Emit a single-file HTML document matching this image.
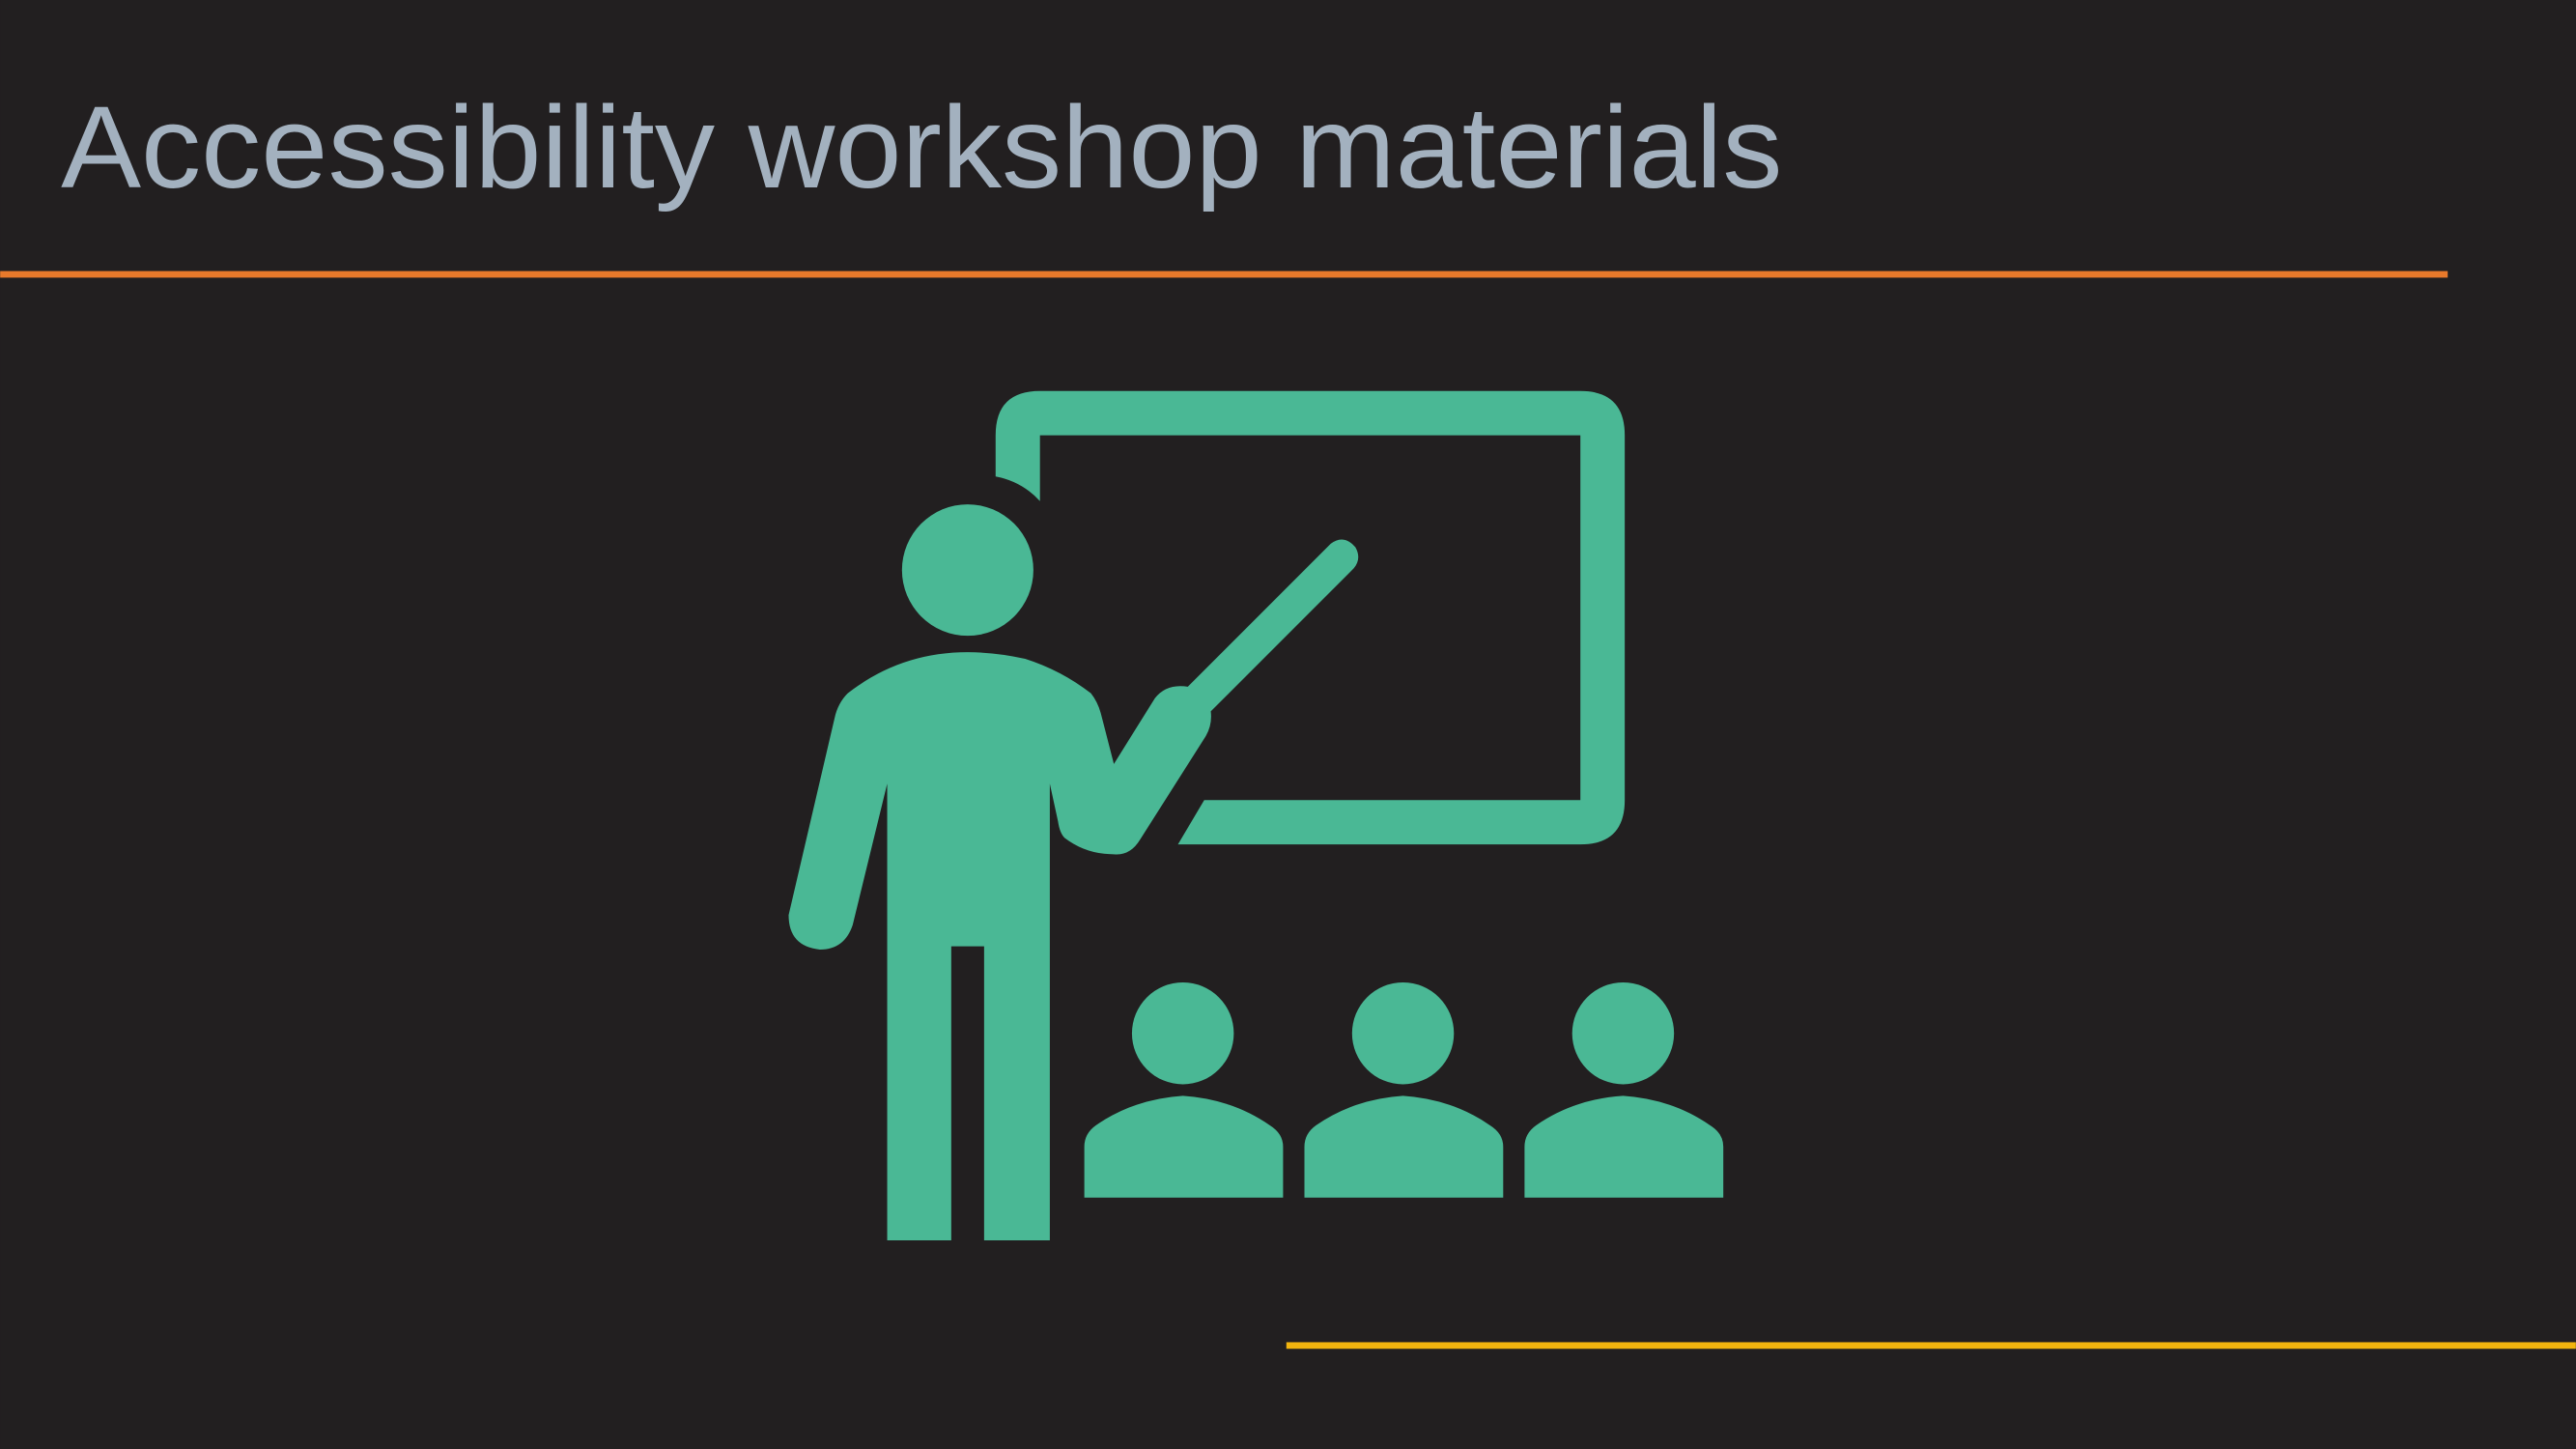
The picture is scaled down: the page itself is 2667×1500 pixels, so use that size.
<!DOCTYPE html>
<html><head><meta charset="utf-8"><style>
html,body{margin:0;padding:0;background:#221f20;width:2667px;height:1500px;overflow:hidden}
svg{display:block}
</style></head><body>
<svg width="2667" height="1500" viewBox="0 0 1568 882" xmlns="http://www.w3.org/2000/svg">
<rect width="1568" height="882" fill="#221f20"/>
<text x="37" y="114" font-family="Liberation Sans, sans-serif" font-size="71" fill="#a3b1bf" textLength="1048" lengthAdjust="spacingAndGlyphs">Accessibility workshop materials</text>
<rect x="0" y="165" width="1490" height="4" fill="#e8792b"/>
<rect x="783" y="817" width="785" height="4" fill="#f2b40e"/>
<g fill="#4ab895">
<path d="M606,290 L606,265 Q606,238 633,238 L962,238 Q989,238 989,265 L989,487 Q989,514 962,514 L717,514 L733,487 L962,487 L962,265 L633,265 L633,305 Q622,293 606,290 Z"/>
<circle cx="589" cy="347" r="40"/>
<path d="M540,755 L540,477 L519,563 Q514,578 499,578 Q480,576 480,557 L508,437 Q510,428 516,422 Q548,397 589,397 Q606,397 624,401 Q646,408 664,422 Q668,427 670,434 L678,465 L703,425 Q710,416 723,418 L810,331 Q818,325 825,333 Q829,340 824,346 L737,433 Q738,441 734,448 L694,511 Q688,521 678,520 Q661,520 648,510 Q645,507 644,500 L639,477 L639,755 L599,755 L599,576 L579,576 L579,755 Z"/>
<circle cx="720" cy="629" r="31"/>
<circle cx="854" cy="629" r="31"/>
<circle cx="988" cy="629" r="31"/>
<path id="b" d="M660,729 L660,698 Q660,690 667,685 Q690,669 720,667 Q750,669 773,685 Q781,690 781,698 L781,729 Z"/>
<path d="M660,729 L660,698 Q660,690 667,685 Q690,669 720,667 Q750,669 773,685 Q781,690 781,698 L781,729 Z" transform="translate(134,0)"/>
<path d="M660,729 L660,698 Q660,690 667,685 Q690,669 720,667 Q750,669 773,685 Q781,690 781,698 L781,729 Z" transform="translate(268,0)"/>
</g>
</svg>
</body></html>
